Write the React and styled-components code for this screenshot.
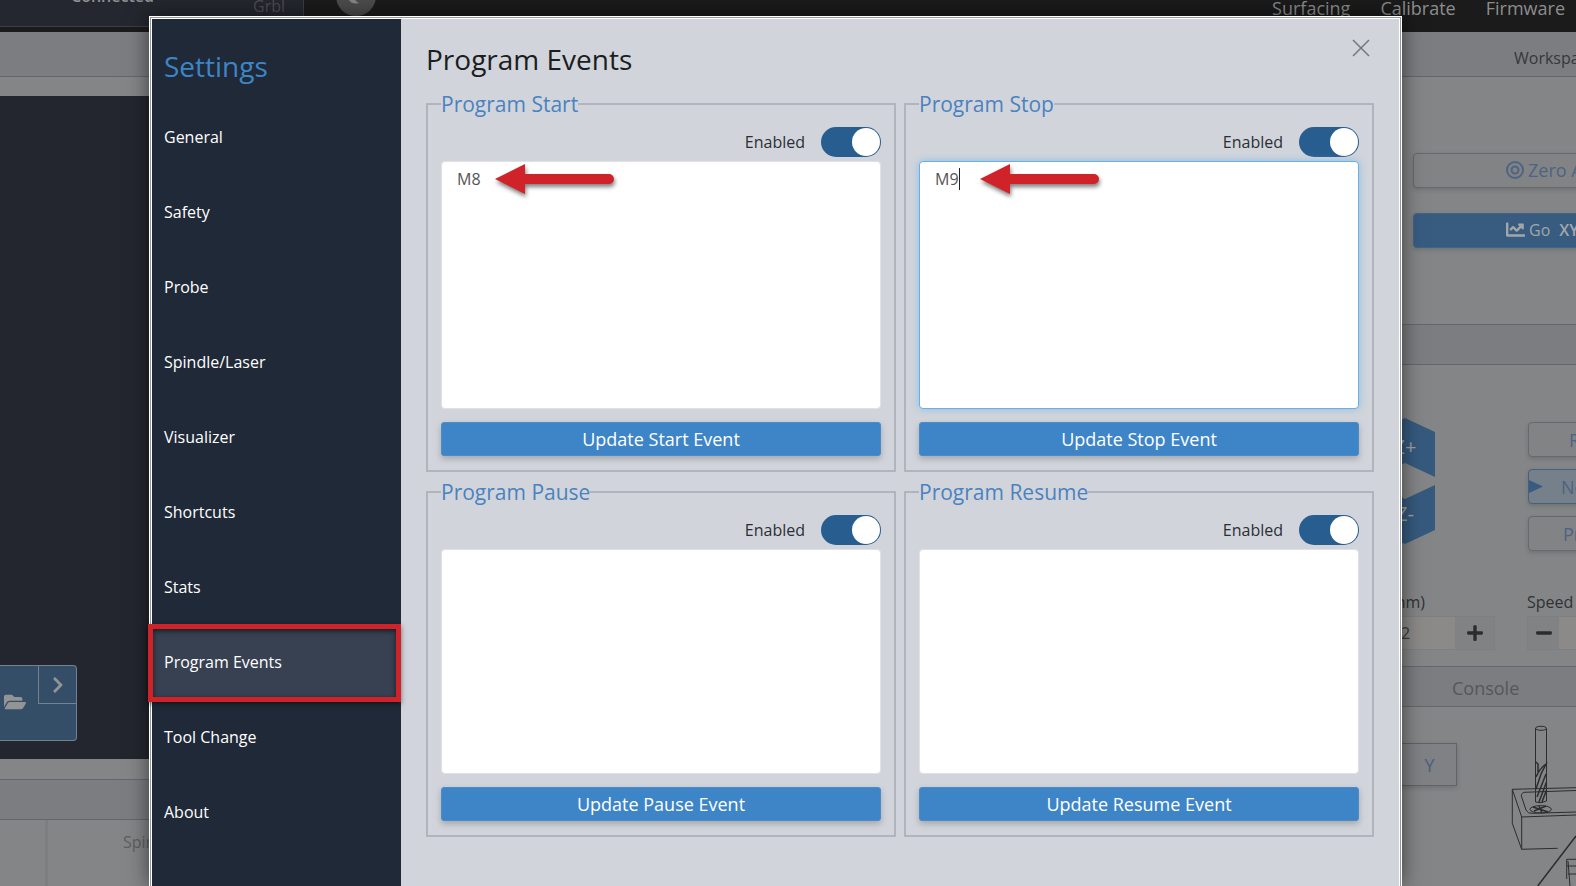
import React from "react";
import styled, { createGlobalStyle, css } from "styled-components";
import { FaChartLine, FaChevronRight, FaFolderOpen, FaMinus, FaPlus } from "react-icons/fa";

const GlobalStyle = createGlobalStyle`
  *, *::before, *::after { box-sizing: border-box; }
  body { margin: 0; overflow: hidden; background: #848586; }
  body, button, input, textarea {
    font-family: "Open Sans", "Noto Sans", sans-serif;
    font-size: 16px;
    line-height: 24px;
  }
`;

const Page = styled.div`
  position: relative;
  height: 100vh;
  min-height: 880px;
  overflow: hidden;
  display: flex;
  flex-direction: column;
`;

/* ---------- machine screen behind the dialog ---------- */

const TopBar = styled.header`
  display: flex;
  align-items: flex-end;
  height: 32px;
  flex: none;
  background: #1b1b1b;
`;

const Status = styled.div`
  display: flex;
  align-items: flex-end;
  justify-content: space-between;
  width: 304px;
  height: 27px;
  margin-bottom: 5px;
  padding: 0 18px 0 71px;
  background: #24272f;
  border: solid #3b3f42;
  border-width: 0 1px 1px 0;
`;

const Connection = styled.span`
  padding-bottom: 18px;
  font-weight: 600;
  color: #909193;
`;

const Firmware = styled.span`
  padding-bottom: 8px;
  color: #4b4e55;
`;

const Logo = styled.svg`
  flex: none;
  margin: 0 0 16px 32px;
`;

const Nav = styled.nav`
  display: flex;
  gap: 30px;
  margin-left: auto;
  padding: 0 11px 8px 0;
`;

const NavLink = styled.a`
  font-size: 18px;
  line-height: 32px;
  color: #8d8d8d;
  text-decoration: none;
`;

const Workspace = styled.div`
  display: flex;
  flex: 1;
  min-height: 0;
`;

const LeftColumn = styled.section`
  display: flex;
  flex: 1;
  min-width: 0;
  flex-direction: column;
`;

const RightColumn = styled.section`
  display: flex;
  flex-direction: column;
  flex: none;
  width: 210px;
  overflow: hidden;
  white-space: nowrap;
`;

const PanelHeader = styled.div`
  display: flex;
  flex: none;
  align-items: center;
  height: ${(p) => (p.$tall ? 45 : 41)}px;
  padding: ${(p) => (p.$tall ? 8 : 2)}px 0 0 ${(p) => p.$indent || 0}px;
  background: #7c7d80;
  border: solid #65676b;
  border-width: ${(p) => (p.$tall ? 0 : 1)}px 0 1px;
  color: ${(p) => (p.$muted ? "#54575b" : "#35373a")};
  font-size: ${(p) => (p.$muted ? 18 : 16)}px;
`;

const VisualizerPanel = styled.div`
  display: flex;
  flex: 1;
  align-items: flex-end;
  margin: 19px 0 20px;
  padding-bottom: 18px;
  background: #23262e;
`;

const FileControls = styled.div`
  display: flex;
  width: 77px;
  height: 76px;
  background: #344e68;
  border: 1px solid #74818e;
  border-left: 0;
  border-radius: 0 4px 4px 0;
  color: #929496;
`;

const OpenFile = styled.button`
  flex: 1;
  padding: 0 8px 0 0;
  border: 0;
  background: none;
  color: inherit;
  font-size: 22px;
  line-height: 22px;
`;

const MoreFiles = styled.button`
  display: flex;
  align-items: center;
  justify-content: center;
  width: 38px;
  height: 38px;
  padding: 0;
  border: solid #74818e;
  border-width: 0 0 1px 1px;
  background: none;
  color: inherit;
  font-size: 18px;
`;

const LowerPanel = styled.div`
  display: flex;
  flex: none;
  height: 66px;
  color: #5d5f62;
`;

const LowerCell = styled.div`
  width: 48px;
  border-right: 3px solid #7d7e80;
`;

const LowerLabel = styled.div`
  padding: 10px 0 0 75px;
`;

const LocationPanel = styled.div`
  display: flex;
  flex: none;
  flex-direction: column;
  gap: 25px;
  height: 247px;
  padding: 76px 0 0 47px;
`;

const MachineButton = styled.button`
  display: flex;
  align-items: center;
  flex: none;
  gap: 4px;
  width: 320px;
  height: 35px;
  padding: 0 0 2px 92px;
  border: 1px solid #66696e;
  border-radius: 4px;
  background: #828384;
  color: #4d6484;
  font-size: 18px;
  box-shadow: 0 2px 4px rgba(0, 0, 0, 0.15);
  ${(p) =>
    p.$primary &&
    css`
      background: #385c80;
      border-color: #446486;
      color: #a3a6a9;
      font-size: 16px;
    `}
`;

const Axis = styled.b`
  margin-left: 5px;
  font-weight: 600;
`;

const JogPanel = styled.div`
  display: flex;
  flex: none;
  flex-direction: column;
  justify-content: space-between;
  height: 301px;
  padding: 53px 0 16px;
`;

const JogRow = styled.div`
  display: flex;
`;

const HexColumn = styled.div`
  display: flex;
  flex-direction: column;
  gap: 8px;
  padding: 0 93px 0 9px;
`;

const HexButton = styled.button`
  width: 60px;
  height: 59px;
  padding: 0 0 2px;
  border: 0;
  background: #365a7e;
  color: #a0a3a6;
  font-size: 20px;
  clip-path: ${(p) =>
    p.$down
      ? "polygon(0 0, 50% 14px, 100% 0, 100% 45px, 50% 100%, 0 45px)"
      : "polygon(50% 0, 100% 14px, 100% 100%, 50% 45px, 0 100%, 0 14px)"};
`;

const SpeedColumn = styled.div`
  display: flex;
  flex-direction: column;
  gap: 12px;
  padding-top: 4px;
`;

const SpeedButton = styled.button`
  position: relative;
  width: 120px;
  height: 35px;
  padding: 0 0 0 ${(p) => p.$indent}px;
  border: 1px solid ${(p) => (p.$active ? "#44617f" : "#66696e")};
  border-radius: 4px;
  background: ${(p) => (p.$active ? "#75808b" : "#828384")};
  color: #4d6284;
  font-size: 18px;
  text-align: left;
  box-shadow: 0 2px 4px rgba(0, 0, 0, 0.15);
`;

const ActiveMark = styled.svg`
  position: absolute;
  left: 0;
  top: 10px;
`;

const FieldRow = styled.div`
  display: flex;
  gap: 32px;
`;

const Field = styled.div`
  flex: none;
  width: 129px;
`;

const FieldLabel = styled.label`
  display: block;
  height: 26px;
  padding-left: ${(p) => p.$indent || 0}px;
  color: #303234;
`;

const Stepper = styled.div`
  display: flex;
  height: 34px;
  border: 1px solid #7e7f80;
`;

const StepInput = styled.input`
  flex: 1;
  min-width: 0;
  padding: 0 0 0 34px;
  border: 0;
  background: #8b8a88;
  color: #3c3d3e;
`;

const StepButton = styled.button`
  display: flex;
  align-items: center;
  justify-content: center;
  width: ${(p) => (p.$wide ? 39 : 31)}px;
  padding: 0;
  border: 0;
  background: #818283;
  color: #2b2c2e;
  font-size: 18px;
`;

const ConsolePanel = styled.div`
  display: flex;
  flex: 1;
  gap: 53px;
  padding-top: 17px;
`;

const AxisTab = styled.button`
  width: 91px;
  height: 43px;
  margin-top: 19px;
  padding: 0 0 0 36px;
  border: 1px solid #606367;
  background: #7f8184;
  color: #4c6080;
  font-size: 18px;
  box-shadow: 0 2px 5px rgba(0, 0, 0, 0.15);
`;

const Sketch = styled.svg`
  flex: none;
`;

/* ---------- settings dialog ---------- */

const Overlay = styled.div`
  position: absolute;
  inset: 0;
  display: flex;
  padding: 16px 174px 0 149px;
`;

const Dialog = styled.div`
  display: flex;
  flex: 1;
  border: 3px double #fff;
  border-bottom: 0;
  background: #94979b;
  box-shadow: 0 0 20px rgba(0, 0, 0, 0.55);
`;

const Sidebar = styled.aside`
  flex: none;
  width: 249px;
  background: #1f2937;
`;

const SidebarTitle = styled.h2`
  margin: 0;
  padding: 27px 12px 14px;
  color: #3e85c7;
  font-size: 28px;
  font-weight: 400;
  line-height: 40px;
`;

const MenuItem = styled.button`
  position: relative;
  display: block;
  width: 100%;
  height: 75px;
  padding: 0 12px 2px;
  border: 0;
  background: ${(p) => (p.$active ? "#374151" : "transparent")};
  color: #fff;
  text-align: left;
`;

const Highlight = styled.span`
  position: absolute;
  inset: -1px 0 -2px -4px;
  border: 5px solid #cf2229;
  box-shadow: 0 2px 5px rgba(0, 0, 0, 0.5), inset 0 2px 5px rgba(0, 0, 0, 0.6);
`;

const Content = styled.main`
  flex: 1;
  min-width: 0;
  padding: 20px 25px;
  background: #d1d5db;
`;

const TitleRow = styled.div`
  display: flex;
  align-items: flex-start;
  justify-content: space-between;
  height: 51px;
`;

const Title = styled.h1`
  margin: 0;
  color: #1b1d20;
  font-size: 28px;
  font-weight: 400;
  line-height: 40px;
`;

const CloseButton = styled.button`
  display: flex;
  padding: 0 4px;
  border: 0;
  background: none;
  color: #73777d;
`;

const EventGrid = styled.div`
  display: grid;
  grid-template-columns: 1fr 1fr;
  gap: 6px 8px;
`;

const EventBox = styled.fieldset`
  min-width: 0;
  margin: 0;
  padding: 9px 13px 14px;
  border: 2px solid #afb4bd;
`;

const Legend = styled.legend`
  padding: 0;
  color: #4a82c0;
  font-size: 21px;
  line-height: 28px;
`;

const ToggleRow = styled.label`
  display: flex;
  align-items: center;
  justify-content: flex-end;
  gap: 16px;
  height: 30px;
  color: #2b2f35;
`;

const Toggle = styled.input`
  appearance: none;
  width: 60px;
  height: 30px;
  margin: 0;
  border-radius: 15px;
  background: #275d8f;

  &::before {
    content: "";
    display: block;
    width: 28px;
    height: 28px;
    margin: 1px;
    border-radius: 50%;
    background: #fff;
  }

  &:checked::before { margin-left: 31px; }
`;

const Editor = styled.div`
  position: relative;
  margin: 4px 0 13px;
`;

const CodeArea = styled.textarea`
  display: block;
  width: 100%;
  height: ${(p) => (p.$short ? 225 : 248)}px;
  padding: 5px 15px;
  border: 1px solid ${(p) => (p.$focused ? "#66afe9" : "#dfe1e5")};
  border-radius: 4px;
  background: #fff;
  color: #555;
  resize: none;
  outline: none;
  box-shadow: ${(p) => (p.$focused ? "0 0 8px rgba(102, 175, 233, 0.6)" : "none")};
`;

const Caret = styled.span`
  position: absolute;
  left: 40px;
  top: 7px;
  width: 1px;
  height: 22px;
  background: #222;
`;

const Pointer = styled.svg`
  position: absolute;
  top: 0;
  left: ${(p) => p.$left}px;
  filter: drop-shadow(1px 3px 2px rgba(0, 0, 0, 0.5));
`;

const UpdateButton = styled.button`
  display: block;
  width: 100%;
  height: 34px;
  padding: 0;
  border: 1px solid #4a8bc8;
  border-radius: 3px;
  background: #3e85c7;
  color: #fff;
  font-size: 18px;
  box-shadow: 0 3px 6px rgba(0, 0, 0, 0.22);
`;

const MENU = [
  "General", "Safety", "Probe", "Spindle/Laser", "Visualizer",
  "Shortcuts", "Stats", "Program Events", "Tool Change", "About",
];

const EVENTS = [
  { name: "Start", code: "M8", arrow: 54 },
  { name: "Stop", code: "M9", arrow: 61, focused: true },
  { name: "Pause", code: "", short: true },
  { name: "Resume", code: "", short: true },
];

function ProgramEvent({ name, code, arrow, focused, short }) {
  return (
    <EventBox>
      <Legend>Program {name}</Legend>
      <ToggleRow>
        Enabled
        <Toggle type="checkbox" role="switch" defaultChecked />
      </ToggleRow>
      <Editor>
        <CodeArea
          aria-label={`Program ${name} code`}
          defaultValue={code}
          spellCheck={false}
          $focused={focused}
          $short={short}
        />
        {focused && <Caret />}
        {arrow && (
          <Pointer $left={arrow} width="120" height="36" viewBox="0 0 120 36" aria-hidden="true">
            <path d="M0 18 L30 3 V13 H114 A5 5 0 0 1 114 23 H30 V33 Z" fill="#cf2229" />
          </Pointer>
        )}
      </Editor>
      <UpdateButton type="button">Update {name} Event</UpdateButton>
    </EventBox>
  );
}

function MachineScreen() {
  return (
    <>
      <TopBar>
        <Status>
          <Connection>Connected</Connection>
          <Firmware>Grbl</Firmware>
        </Status>
        <Logo width="40" height="40" viewBox="0 0 40 40" aria-hidden="true">
          <circle cx="20" cy="20" r="20" fill="#4c4c4d" />
          <path d="M11 20 C13 26 17 29 23 27 C19 25 17 22 18 18 Z" fill="#858585" />
        </Logo>
        <Nav>
          <NavLink href="#surfacing">Surfacing</NavLink>
          <NavLink href="#calibrate">Calibrate</NavLink>
          <NavLink href="#firmware">Firmware</NavLink>
        </Nav>
      </TopBar>
      <Workspace>
        <LeftColumn>
          <PanelHeader $tall />
          <VisualizerPanel>
            <FileControls>
              <OpenFile type="button" aria-label="Open file"><FaFolderOpen /></OpenFile>
              <MoreFiles type="button" aria-label="Recent files"><FaChevronRight /></MoreFiles>
            </FileControls>
          </VisualizerPanel>
          <PanelHeader />
          <LowerPanel>
            <LowerCell />
            <LowerLabel>Spindle</LowerLabel>
          </LowerPanel>
        </LeftColumn>
        <RightColumn>
          <PanelHeader $tall $indent={148}>Workspace:</PanelHeader>
          <LocationPanel>
            <MachineButton type="button">
              <svg width="18" height="18" viewBox="0 0 18 18" fill="none" stroke="currentColor" strokeWidth="2" aria-hidden="true">
                <circle cx="9" cy="9" r="8" />
                <circle cx="9" cy="9" r="3.5" />
              </svg>
              Zero All
            </MachineButton>
            <MachineButton type="button" $primary>
              <FaChartLine size={19} />
              Go <Axis>XY0</Axis>
            </MachineButton>
          </LocationPanel>
          <PanelHeader />
          <JogPanel>
            <JogRow>
              <HexColumn>
                <HexButton type="button">Z+</HexButton>
                <HexButton type="button" $down>Z-</HexButton>
              </HexColumn>
              <SpeedColumn>
                <SpeedButton type="button" $indent={40}>Rapid</SpeedButton>
                <SpeedButton type="button" $indent={32} $active>
                  <ActiveMark width="14" height="13" viewBox="0 0 14 13" aria-hidden="true">
                    <path d="M0 0 L14 6.500 L0 13 Z" fill="#385c80" />
                  </ActiveMark>
                  Normal
                </SpeedButton>
                <SpeedButton type="button" $indent={34}>Precise</SpeedButton>
              </SpeedColumn>
            </JogRow>
            <FieldRow>
              <Field>
                <FieldLabel htmlFor="step" $indent={20}>(mm)</FieldLabel>
                <Stepper>
                  <StepInput id="step" defaultValue="2" />
                  <StepButton type="button" aria-label="Increase step" $wide><FaPlus /></StepButton>
                </Stepper>
              </Field>
              <Field>
                <FieldLabel htmlFor="speed">Speed</FieldLabel>
                <Stepper>
                  <StepButton type="button" aria-label="Decrease speed"><FaMinus /></StepButton>
                  <StepInput id="speed" defaultValue="" />
                </Stepper>
              </Field>
            </FieldRow>
          </JogPanel>
          <PanelHeader $muted $indent={86}>Console</PanelHeader>
          <ConsolePanel>
            <AxisTab type="button">Y</AxisTab>
            <Sketch width="66" height="162" viewBox="0 0 66 162" fill="none" stroke="#2b2d2f" strokeWidth="1" aria-hidden="true">
              <ellipse cx="31" cy="4.300" rx="5.500" ry="2" />
              <path d="M25.500 4.500V78M36.500 4.500V77M25.500 78Q31 80 36.500 77" />
              <path d="M26 53Q30 44 36 40L31 50L26 65M36 50L27 73M36.500 58L29 78M36.500 66L32 78M26 38L28 40V48" strokeWidth="1.500" />
              <path d="M66 63.700L2.300 65.300V99.300L11.700 125.300L47.700 124.300M2.300 65.300L11.700 93V125.300M11.700 93L66 91" />
              <path d="M66 66.500L14 68.300Q10 70 12 74L16 86Q18 90 22 89.300L66 88" />
              <ellipse cx="30.700" cy="85.300" rx="10.700" ry="3.700" />
              <path d="M23 83L38 88M24 87L36 82M29 82L32 89" strokeWidth="1.500" />
              <path d="M27.700 162L66 112" strokeWidth="1.500" />
              <path d="M66 135.300H56.700V155M57 142H66M58 150H66M58 137L60 162" />
            </Sketch>
          </ConsolePanel>
        </RightColumn>
      </Workspace>
    </>
  );
}

export default function App() {
  return (
    <Page>
      <GlobalStyle />
      <MachineScreen />
      <Overlay>
        <Dialog role="dialog" aria-label="Settings">
          <Sidebar>
            <SidebarTitle>Settings</SidebarTitle>
            {MENU.map((label) => (
              <MenuItem key={label} type="button" $active={label === "Program Events"}>
                {label}
                {label === "Program Events" && <Highlight />}
              </MenuItem>
            ))}
          </Sidebar>
          <Content>
            <TitleRow>
              <Title>Program Events</Title>
              <CloseButton type="button" aria-label="Close">
                <svg width="18" height="18" viewBox="0 0 18 18" fill="none" stroke="currentColor" strokeWidth="1.500">
                  <path d="M1 1L17 17M17 1L1 17" />
                </svg>
              </CloseButton>
            </TitleRow>
            <EventGrid>
              {EVENTS.map((event) => (
                <ProgramEvent key={event.name} {...event} />
              ))}
            </EventGrid>
          </Content>
        </Dialog>
      </Overlay>
    </Page>
  );
}
